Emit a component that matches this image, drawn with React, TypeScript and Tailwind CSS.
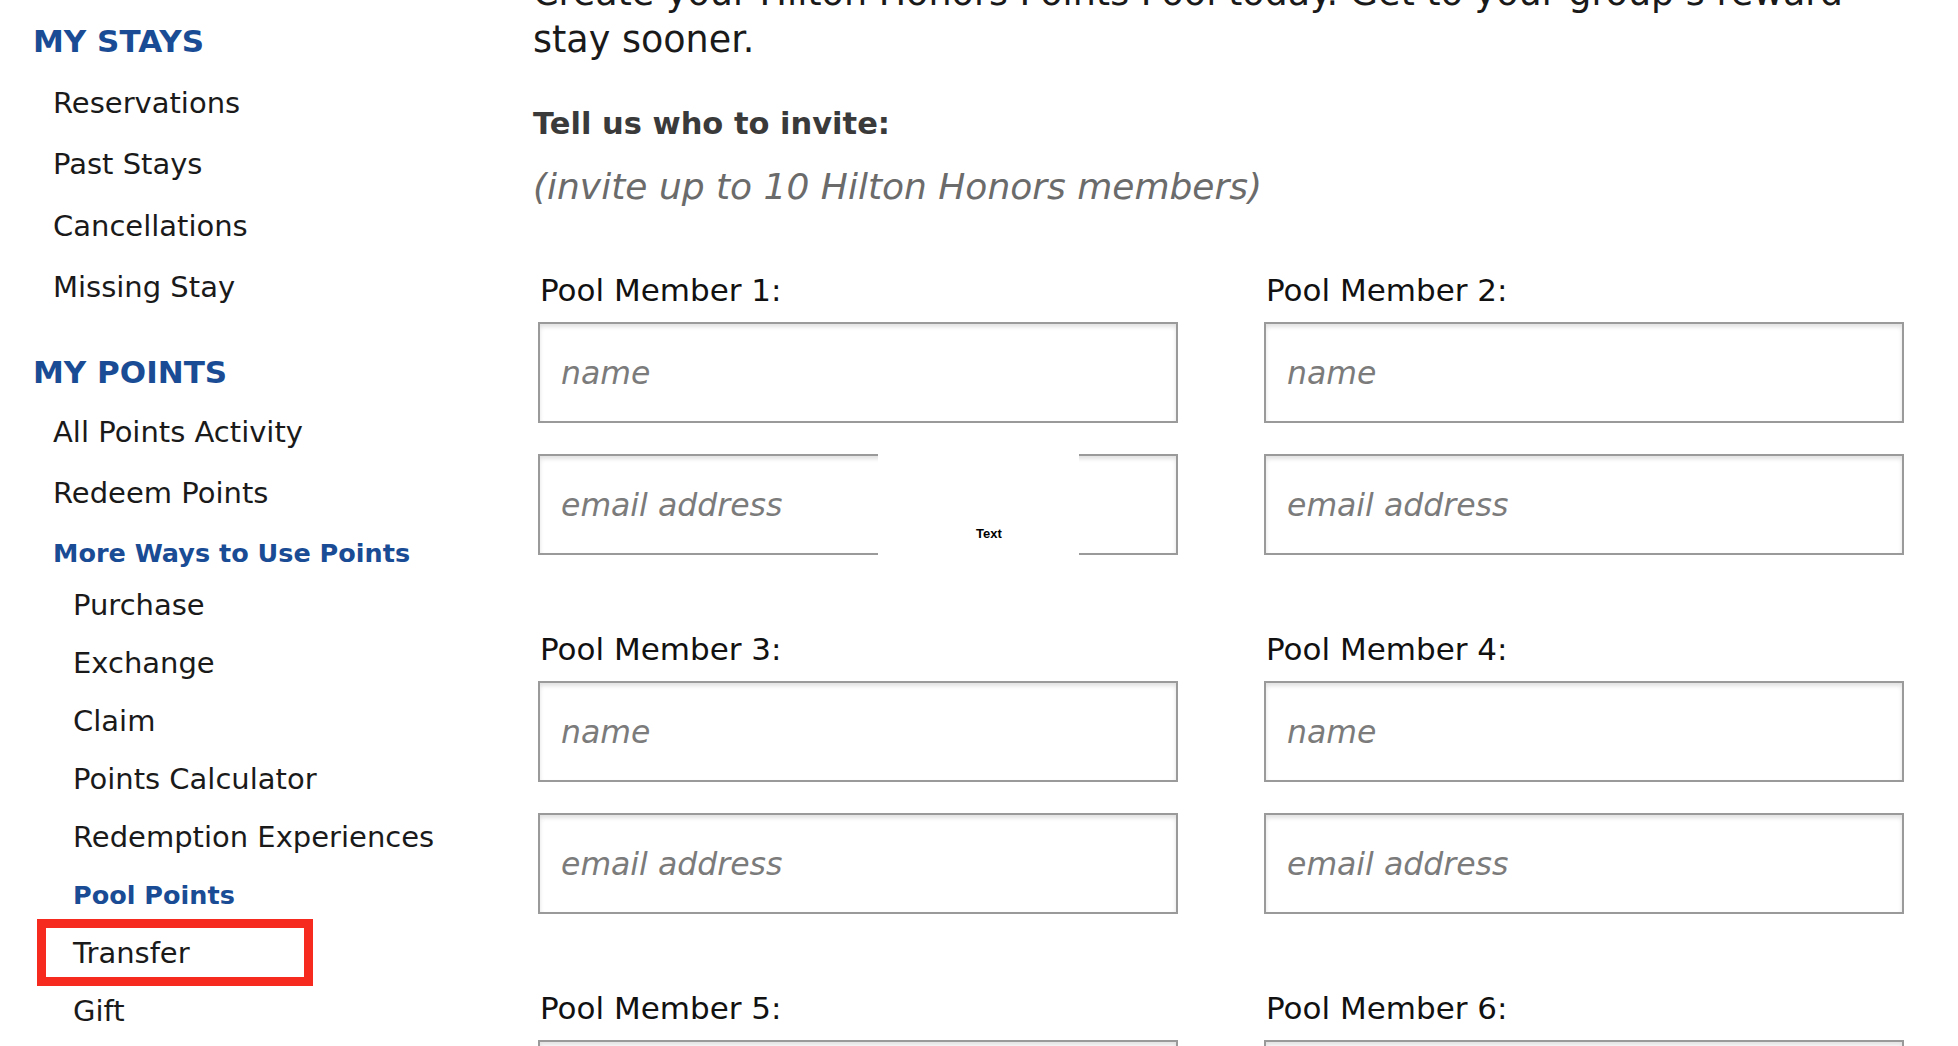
import React from 'react'

const BLUE = 'text-[#194c94]'

interface NavItem {
  label: string
  active?: boolean
}

const STAYS: NavItem[] = [
  { label: 'Reservations' },
  { label: 'Past Stays' },
  { label: 'Cancellations' },
  { label: 'Missing Stay' },
]

const MORE_WAYS: NavItem[] = [
  { label: 'Purchase' },
  { label: 'Exchange' },
  { label: 'Claim' },
  { label: 'Points Calculator' },
  { label: 'Redemption Experiences' },
  { label: 'Pool Points', active: true },
  { label: 'Transfer' },
  { label: 'Gift' },
]

function SubItem({ label, active }: NavItem) {
  return (
    <li
      className={
        active
          ? `h-[58px] leading-[58px] text-[25.5px] font-bold ${BLUE}`
          : 'h-[58px] leading-[58px] text-[29px] text-[#1a1a1a]'
      }
    >
      {label}
    </li>
  )
}

function Sidebar() {
  return (
    <aside className="w-[533px] shrink-0 pl-[33px] pt-[22px]">
      <h2 className={`text-[31px] leading-[38px] font-bold ${BLUE}`}>MY STAYS</h2>
      <ul className="mt-[12.6px] pl-[20px]">
        {STAYS.map((s) => (
          <li key={s.label} className="h-[61.5px] leading-[61.5px] text-[29px] text-[#1a1a1a]">
            {s.label}
          </li>
        ))}
      </ul>

      <h2 className={`mt-[34px] text-[31px] leading-[38px] font-bold ${BLUE}`}>MY POINTS</h2>
      <ul className="mt-[11px] pl-[20px]">
        <li className="h-[61.5px] leading-[61.5px] text-[29px] text-[#1a1a1a]">All Points Activity</li>
        <li className="h-[61.5px] leading-[61.5px] text-[29px] text-[#1a1a1a]">Redeem Points</li>
        <li className={`h-[51px] pt-[5px] leading-[46px] text-[25.5px] font-bold ${BLUE}`}>
          More Ways to Use Points
        </li>
        <li>
          <ul className="pl-[20px]">
            {MORE_WAYS.map((m) => (
              <SubItem key={m.label} {...m} />
            ))}
          </ul>
        </li>
      </ul>
    </aside>
  )
}

function MemberField({ placeholder }: { placeholder: string }) {
  return (
    <input
      type="text"
      placeholder={placeholder}
      className="block h-[101px] w-full border-2 border-[#9a9a9a] bg-white pl-[21px] text-[31.5px] text-[#1a1a1a] shadow-[inset_0_3px_4px_rgba(0,0,0,0.12)] outline-none placeholder:italic placeholder:text-[#7b7b7b]"
    />
  )
}

function PoolMember({ n, note }: { n: number; note?: boolean }) {
  return (
    <div>
      <label className="block pl-[2px] text-[31px] leading-[40px] text-[#111]">Pool Member {n}:</label>
      <div className="mt-[12px] flex flex-col gap-[31px]">
        <MemberField placeholder="name" />
        <div className="relative">
          <MemberField placeholder="email address" />
          {note && (
            <div className="absolute left-[340px] top-[-5px] h-[111px] w-[201px] bg-white pl-[98px] pt-[72px]">
              <span className="font-['Liberation_Sans',Arial,sans-serif] text-[13px] leading-none font-bold text-black">
                Text
              </span>
            </div>
          )}
        </div>
      </div>
    </div>
  )
}

export default function App() {
  return (
    <div className="relative flex h-[1046px] w-full overflow-hidden bg-white font-['DejaVu_Sans',sans-serif]">
      <Sidebar />

      <main className="min-w-0 flex-1">
        <div className="-mt-[30.6px]">
          <p className="whitespace-nowrap text-[36.5px] leading-[47px] text-[#1a1a1a]">
            Create your Hilton Honors Points Pool today. Get to your group’s reward
            <br />
            stay sooner.
          </p>

          <h3 className="mt-[41px] text-[30.5px] leading-[40px] font-bold text-[#3a3a3a]">
            Tell us who to invite:
          </h3>
          <p className="mt-[19px] text-[36px] leading-[47px] italic text-[#6b6b6b]">
            (invite up to 10 Hilton Honors members)
          </p>

          <div className="ml-[5px] mt-[60px] grid grid-cols-[640px_640px] gap-x-[86px] gap-y-[74px]">
            {[1, 2, 3, 4, 5, 6].map((n) => (
              <PoolMember key={n} n={n} note={n === 1} />
            ))}
          </div>
        </div>
      </main>

      {/* annotation box around Transfer */}
      <div className="pointer-events-none absolute left-[37px] top-[919px] h-[67px] w-[276px] border-[9px] border-[#f72a1f]" />
    </div>
  )
}
